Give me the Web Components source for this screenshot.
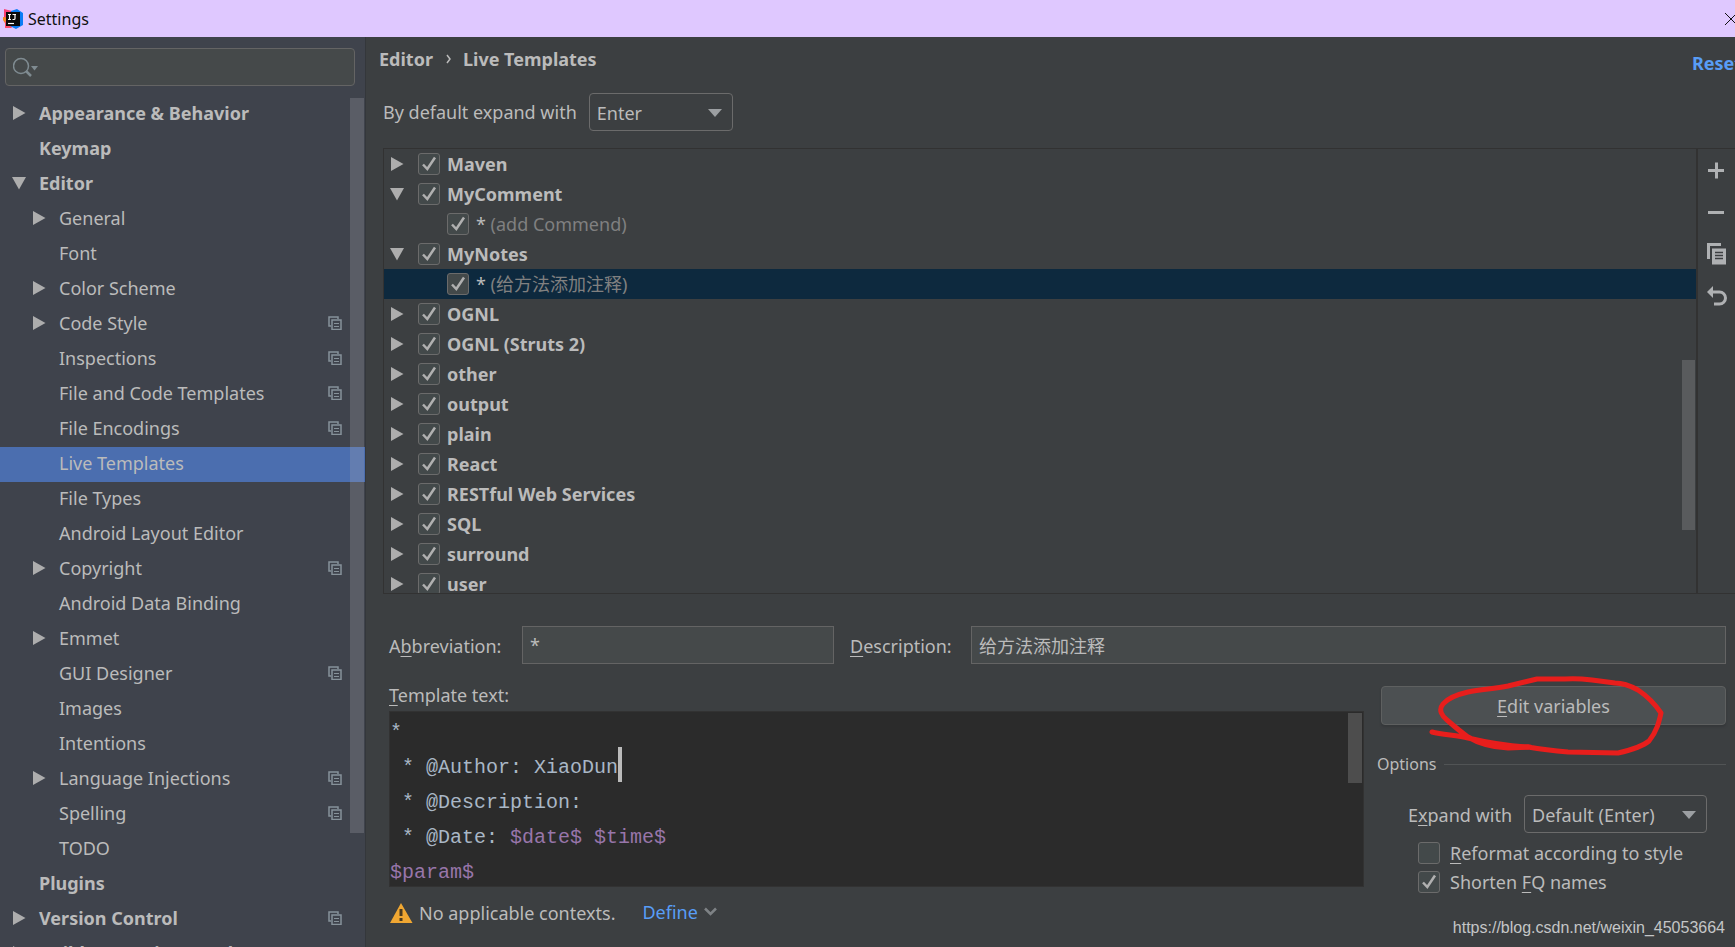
<!DOCTYPE html>
<html lang="en">
<head>
<meta charset="utf-8">
<title>Settings</title>
<style>
  html, body { margin: 0; height: 100%; }
  body {
    font: 18px/30px "Noto Sans", "Noto Sans CJK SC", sans-serif;
    color: #bbbbbb;
    background: #3c3f41;
    overflow: hidden;
  }
</style>
</head>
<body>
<settings-window></settings-window>

<script>
const define = (name, html, setup) => {
  const template = document.createElement('template');
  template.innerHTML = html;
  customElements.define(name, class extends HTMLElement {
    connectedCallback() {
      if (this.shadowRoot) return;
      const root = this.attachShadow({ mode: 'open' });
      root.append(template.content.cloneNode(true));
      if (setup) setup(this, root);
    }
  });
};

/* Disclosure triangle: state="open" | "closed" | "none" */
define('tree-arrow', `
  <style>
    :host { display: block; width: 14px; height: 14px; flex: none; color: #adadad; }
    svg { display: none; width: 14px; height: 14px; }
    :host([state="open"]) .open, :host([state="closed"]) .closed { display: block; }
  </style>
  <svg class="closed" viewBox="0 0 14 14" aria-hidden="true"><path d="M1 0v14l12.500-7z" fill="currentColor"/></svg>
  <svg class="open" viewBox="0 0 14 14" aria-hidden="true"><path d="M0 1h14l-7 12.500z" fill="currentColor"/></svg>
`);

define('project-badge', `
  <style>:host { display: block; width: 14px; height: 14px; } svg { display: block; }</style>
  <svg width="14" height="14" viewBox="0 0 14 14" fill="none" stroke="#87929a" aria-hidden="true">
    <path d="M3 10H1V1h9v2" stroke-width="1.500"/>
    <rect x="4" y="4" width="9" height="9.500" stroke-width="1.500"/>
    <path d="M6 7.500h5M6 10.500h5"/>
  </svg>
`);

define('check-box', `
  <style>
    :host { display: block; }
    label { display: flex; align-items: center; gap: var(--check-gap, 7px); white-space: nowrap; }
    .box { position: relative; width: 22px; height: 22px; flex: none; }
    input {
      appearance: none; display: block; box-sizing: border-box; margin: 0;
      width: 22px; height: 22px; background: #43494a;
      border: 1px solid #6b6b6b; border-radius: 3px;
    }
    svg { position: absolute; inset: 0; display: none; pointer-events: none; }
    input:checked + svg { display: block; }
  </style>
  <label>
    <span class="box">
      <input type="checkbox">
      <svg width="22" height="22" viewBox="0 0 22 22" fill="none" stroke="#b0b0b0" stroke-width="2.500" aria-hidden="true"><path d="M5 11.500l4.300 4.500L17 4.500"/></svg>
    </span>
    <span><slot></slot></span>
  </label>
`, (host, root) => { root.querySelector('input').checked = host.hasAttribute('checked'); });

define('combo-box', `
  <style>
    :host { display: block; position: relative; }
    select {
      appearance: none; display: block; box-sizing: border-box; width: 100%; height: 38px;
      margin: 0; padding: 2px 32px 0 7px; font: inherit; color: #bbbbbb;
      background: #3c3f41; border: 1px solid #6b6b6b; border-radius: 4px; outline: none;
    }
    svg { position: absolute; right: 11px; top: 16px; pointer-events: none; }
  </style>
  <select></select>
  <svg width="14" height="8" viewBox="0 0 14 8" aria-hidden="true"><path d="M0 0h14L7 8z" fill="#9c9fa2"/></svg>
`, (host, root) => {
  const select = root.querySelector('select');
  select.add(new Option(host.getAttribute('value')));
  select.setAttribute('aria-label', host.getAttribute('label'));
});

define('title-bar', `
  <style>
    :host { display: flex; align-items: center; gap: 4px; height: 37px; padding-left: 3px; background: #dfc8ff; color: #101010; font-size: 16px; overflow: hidden; }
    .title { flex: 1; }
    button { flex: none; width: 10px; height: 36px; padding: 0; border: 0; background: none; }
    svg { display: block; }
  </style>
  <svg width="21" height="20" viewBox="0 0 21 20" aria-hidden="true">
    <path d="M1 0l8 2-1 9-7 2z" fill="#fc3f72"/>
    <path d="M0 8l6 1 2 8-5-1-3-5z" fill="#f98a1e"/>
    <path d="M2 12l9 5-3 2-6 0z" fill="#ff4c6c"/>
    <path d="M8 2l6-2 6 4v12l-7 4-6-3z" fill="#0a7cf5"/>
    <rect x="3" y="3" width="14" height="14" fill="#0b0b0b"/>
    <path d="M5 5.500h3M6.500 5.500v5M5 10.500h3M9.500 5.500H13M12 5.500v4q0 1-1 1H9.500" stroke="#fff" stroke-width="1.200" fill="none"/>
    <path d="M5 14.500h6" stroke="#fff" stroke-width="1.200"/>
  </svg>
  <span class="title">Settings</span>
  <button aria-label="Close"><svg width="12" height="36" viewBox="0 0 12 36" aria-hidden="true"><path d="M0 12l12 12M12 12L0 24" stroke="#111"/></svg></button>
`);

define('settings-item', `
  <style>
    :host { display: flex; align-items: center; gap: 13px; box-sizing: border-box; height: 35px; padding: 0 23px 3px 12px; white-space: nowrap; }
    :host([level="1"]) { padding-left: 32px; }
    :host([level="0"]) { font-weight: bold; }
    :host([selected]) { background: #4b6eaf; }
    span { flex: 1; }
  </style>
  <tree-arrow></tree-arrow><span><slot></slot></span>
`, (host, root) => {
  host.setAttribute('role', 'treeitem');
  root.querySelector('tree-arrow').setAttribute('state', host.getAttribute('state') || 'none');
  if (host.hasAttribute('badge')) root.append(document.createElement('project-badge'));
});

define('settings-sidebar', `
  <style>
    :host { display: flex; flex-direction: column; min-height: 0; background: #3f434c; border-right: 1px solid #34373b; }
    .search { position: relative; margin: 11px 10px 11px 5px; }
    .search svg { position: absolute; left: 8px; top: 9px; }
    input {
      display: block; box-sizing: border-box; width: 100%; height: 38px; padding: 0 8px 0 36px;
      font: inherit; color: inherit; background: #45494a; border: 1px solid #646464; border-radius: 4px; outline: none;
    }
    .tree { position: relative; flex: 1; min-height: 0; overflow: hidden; }
    .thumb { position: absolute; right: 1px; top: 1px; width: 14px; height: 735px; background: rgba(170, 170, 180, .25); }
  </style>
  <div class="search">
    <input type="search" aria-label="Search settings">
    <svg width="28" height="20" viewBox="0 0 28 20" fill="none" stroke="#7f8b91" stroke-width="1.500" aria-hidden="true">
      <circle cx="8" cy="9" r="7.500"/><path d="M13 14l5 5" stroke-width="2.500"/><path d="M18 9h7l-3.500 4.500z" fill="#7f8b91" stroke="none"/>
    </svg>
  </div>
  <div class="tree" role="tree">
    <settings-item level="0" state="closed">Appearance &amp; Behavior</settings-item>
    <settings-item level="0">Keymap</settings-item>
    <settings-item level="0" state="open">Editor</settings-item>
    <settings-item level="1" state="closed">General</settings-item>
    <settings-item level="1">Font</settings-item>
    <settings-item level="1" state="closed">Color Scheme</settings-item>
    <settings-item level="1" state="closed" badge>Code Style</settings-item>
    <settings-item level="1" badge>Inspections</settings-item>
    <settings-item level="1" badge>File and Code Templates</settings-item>
    <settings-item level="1" badge>File Encodings</settings-item>
    <settings-item level="1" selected>Live Templates</settings-item>
    <settings-item level="1">File Types</settings-item>
    <settings-item level="1">Android Layout Editor</settings-item>
    <settings-item level="1" state="closed" badge>Copyright</settings-item>
    <settings-item level="1">Android Data Binding</settings-item>
    <settings-item level="1" state="closed">Emmet</settings-item>
    <settings-item level="1" badge>GUI Designer</settings-item>
    <settings-item level="1">Images</settings-item>
    <settings-item level="1">Intentions</settings-item>
    <settings-item level="1" state="closed" badge>Language Injections</settings-item>
    <settings-item level="1" badge>Spelling</settings-item>
    <settings-item level="1">TODO</settings-item>
    <settings-item level="0">Plugins</settings-item>
    <settings-item level="0" state="closed" badge>Version Control</settings-item>
    <settings-item level="0" state="closed">Build, Execution, Deployment</settings-item>
    <div class="thumb"></div>
  </div>
`);

define('template-row', `
  <style>
    :host { display: flex; align-items: center; gap: 14px; height: 30px; padding-left: 6px; font-weight: bold; }
    :host([child]) { padding-left: 35px; font-weight: normal; }
    :host([selected]) { background: #0d293e; }
    ::slotted(i) { font-style: normal; color: #808080; }
  </style>
  <tree-arrow></tree-arrow><check-box checked><slot></slot></check-box>
`, (host, root) => {
  host.setAttribute('role', 'treeitem');
  root.querySelector('tree-arrow').setAttribute('state', host.getAttribute('state') || (host.hasAttribute('child') ? 'none' : 'closed'));
});

define('template-list', `
  <style>
    :host { display: flex; min-height: 0; border: 1px solid #323232; border-right: 0; }
    .tree { position: relative; flex: 1; min-width: 0; overflow: hidden; }
    .thumb { position: absolute; right: 1px; top: 211px; width: 13px; height: 170px; background: #595b5d; }
    .tools { display: flex; flex-direction: column; width: 37px; border-left: 2px solid #323232; }
    button { width: 37px; height: 42px; padding: 0 0 0 8px; border: 0; background: none; }
    svg { display: block; }
  </style>
  <div class="tree" role="tree">
    <template-row>Maven</template-row>
    <template-row state="open">MyComment</template-row>
    <template-row child>* <i>(add Commend)</i></template-row>
    <template-row state="open">MyNotes</template-row>
    <template-row child selected>* <i>(给方法添加注释)</i></template-row>
    <template-row>OGNL</template-row>
    <template-row>OGNL (Struts 2)</template-row>
    <template-row>other</template-row>
    <template-row>output</template-row>
    <template-row>plain</template-row>
    <template-row>React</template-row>
    <template-row>RESTful Web Services</template-row>
    <template-row>SQL</template-row>
    <template-row>surround</template-row>
    <template-row>user</template-row>
    <div class="thumb"></div>
  </div>
  <div class="tools">
    <button aria-label="Add"><svg width="22" height="22" viewBox="0 0 22 22" aria-hidden="true"><path d="M2 11.500h16M10.500 3.500v16" stroke="#afb1b3" stroke-width="3"/></svg></button>
    <button aria-label="Remove"><svg width="22" height="22" viewBox="0 0 22 22" aria-hidden="true"><path d="M2 11.500h16" stroke="#afb1b3" stroke-width="3"/></svg></button>
    <button aria-label="Duplicate"><svg width="22" height="22" viewBox="0 0 22 22" aria-hidden="true"><path d="M2.500 16V1.500H15" fill="none" stroke="#afb1b3" stroke-width="3"/><rect x="5" y="4.500" width="15" height="17" fill="#3c3f41"/><rect x="6" y="5.500" width="14" height="16" fill="#afb1b3"/><path d="M9 9.500h8M9 12.500h8M9 15.500h8" stroke="#3c3f41" stroke-width="1.500"/></svg></button>
    <button aria-label="Restore defaults"><svg width="22" height="22" viewBox="0 0 22 22" aria-hidden="true"><path d="M1 7l6-6v12z" fill="#afb1b3"/><path d="M6 7h7.500a6 6 0 0 1 0 12H8" fill="none" stroke="#afb1b3" stroke-width="3"/></svg></button>
  </div>
`);

define('template-fields', `
  <style>
    :host { display: grid; grid-template-columns: 133px 312px 137px minmax(0, 1fr); align-items: center; }
    input {
      box-sizing: border-box; width: 100%; height: 38px; margin: 0; padding: 0 7px; font: inherit; color: inherit;
      background: #45494a; border: 1px solid #646464; outline: none;
    }
    label { white-space: nowrap; padding-top: 2px; }
    label + input + label { padding-left: 16px; }
    u { text-underline-offset: 3px; }
  </style>
  <label for="abbr">A<u>b</u>breviation:</label><input id="abbr" value="*">
  <label for="desc"><u>D</u>escription:</label><input id="desc" value="给方法添加注释">
`);

define('template-editor', `
  <style>
    :host { display: block; min-width: 0; }
    .label { padding: 15px 0 0; line-height: 32px; }
    .editor {
      position: relative; box-sizing: border-box; height: 176px; overflow: hidden; white-space: pre; outline: none;
      background: #2b2b2b; border: 1px solid #323232; color: #a9b7c6;
      font: 20px/42px "Liberation Mono", monospace;
    }
    .editor p { margin: 0; height: 35px; }
    b { font-weight: normal; color: #9876aa; }
    .caret { display: inline-block; vertical-align: top; width: 4px; height: 35px; background: #bbbbbb; }
    .thumb { position: absolute; right: 1px; top: 1px; width: 14px; height: 70px; background: #4d4d4d; }
    .status { display: flex; align-items: center; height: 52px; }
    .status svg { flex: none; }
    .status span { margin: 0 27px 0 6px; }
    a { display: flex; align-items: center; gap: 6px; color: #589df6; text-decoration: none; margin-bottom: 3px; }
    u { text-underline-offset: 3px; }
  </style>
  <div class="label" id="caption"><u>T</u>emplate text:</div>
  <div class="editor" role="textbox" aria-multiline="true" aria-labelledby="caption" contenteditable="true" spellcheck="false"><p>*</p><p> * @Author: XiaoDun<span class="caret"></span></p><p> * @Description:</p><p> * @Date: <b>$date$</b> <b>$time$</b></p><p><b>$param$</b></p><div class="thumb" contenteditable="false"></div></div>
  <div class="status">
    <svg width="24" height="22" viewBox="0 0 24 22" aria-hidden="true"><path d="M12 1l11.500 20H1z" fill="#f0a732"/><path d="M12 7v7M12 16v3" stroke="#4a3a20" stroke-width="3"/></svg>
    <span>No applicable contexts.</span>
    <a href="#define">Define <svg width="13" height="9" viewBox="0 0 13 9" fill="none" stroke="#7e8285" stroke-width="2.500" aria-hidden="true"><path d="M1 1.500l5.500 5.500L12 1.500"/></svg></a>
  </div>
`);

define('template-options', `
  <style>
    :host { display: block; padding-top: 22px; }
    .edit { position: relative; }
    button {
      display: block; box-sizing: border-box; width: 100%; height: 39px; padding: 0; font: inherit; color: inherit;
      background: #4c5052; border: 1px solid #5e6060; border-radius: 4px; box-shadow: 0 2px 2px #35383a;
    }
    .mark { position: absolute; left: 40px; top: -20px; pointer-events: none; }
    fieldset { margin: 24px 0 0 -4px; padding: 0; border: 0; }
    .legend { display: flex; align-items: center; gap: 8px; font-size: 16px; }
    .legend::after { content: ""; flex: 1; height: 1px; background: #515455; }
    .expand { display: flex; align-items: center; gap: 12px; margin: 16px 19px 0 31px; }
    .expand span { padding-top: 2px; }
    combo-box { flex: 1; }
    .checks { --check-gap: 10px; margin: 5px 0 0 41px; }
    check-box { height: 29px; }
    u { text-underline-offset: 3px; }
  </style>
  <div class="edit">
    <button><u>E</u>dit variables</button>
    <svg class="mark" width="260" height="100" viewBox="40 -20 260 100" fill="none" stroke="#e81e1c" stroke-width="5" stroke-linecap="round" stroke-linejoin="round" aria-hidden="true">
      <path d="M51 46C62 49 76 49 87 52C108 57 127 60 147 61C164 64 175 65 187 66L237 67C250 64 262 60 268 55C276 45 278 36 280 27C274 18 266 10 257 4C248 -1 241 -3 234 -3L211 -6Q195 -8 184 -7L156 -7L127 0C112 3 100 3 87 6C74 9 66 13 62 18C57 24 61 30 66 34C74 41 80 46 87 51C97 57 108 61 127 62L149 61"/>
      <path d="M98 55L110 59L127 61L147 61"/>
    </svg>
  </div>
  <fieldset aria-label="Options">
    <div class="legend">Options</div>
    <div class="expand"><span>E<u>x</u>pand with</span><combo-box value="Default (Enter)" label="Expand with"></combo-box></div>
    <div class="checks">
      <check-box><u>R</u>eformat according to style</check-box>
      <check-box checked>Shorten <u>F</u>Q names</check-box>
    </div>
  </fieldset>
`);

define('live-templates', `
  <style>
    :host { position: relative; display: flex; flex-direction: column; min-width: 0; min-height: 0; overflow: hidden; }
    nav { display: flex; align-items: center; gap: 12px; height: 44px; padding-left: 13px; font-weight: bold; }
    nav .reset { flex: none; width: 43px; margin: 8px 0 0 auto; color: #589df6; text-decoration: none; }
    .default { display: flex; align-items: center; gap: 12px; padding: 12px 0 17px 17px; }
    .default combo-box { width: 144px; }
    template-list { flex: 1; margin-left: 17px; }
    .form { flex: none; padding: 32px 9px 8px 23px; }
    .lower { display: grid; grid-template-columns: minmax(0, 1fr) 345px; gap: 17px; }
    .watermark { position: absolute; right: 10px; bottom: 4px; font: 16px/30px "Liberation Sans", sans-serif; color: #c4c6c7; }
  </style>
  <nav>
    <span>Editor</span>
    <svg width="6" height="10" viewBox="0 0 6 10" fill="none" stroke="#bbbbbb" stroke-width="1.500" aria-hidden="true"><path d="M2 1l3 4-3 4"/></svg>
    <span>Live Templates</span>
    <a class="reset" href="#reset">Reset</a>
  </nav>
  <div class="default"><span>By default expand with</span><combo-box value="Enter" label="By default expand with"></combo-box></div>
  <template-list></template-list>
  <div class="form">
    <template-fields></template-fields>
    <div class="lower"><template-editor></template-editor><template-options></template-options></div>
  </div>
  <div class="watermark">https://blog.csdn.net/weixin_45053664</div>
`);

define('settings-window', `
  <style>
    :host { display: grid; grid-template: auto minmax(0, 1fr) / 366px minmax(0, 1fr); height: 100vh; overflow: hidden; }
    title-bar { grid-column: 1 / -1; }
  </style>
  <title-bar></title-bar>
  <settings-sidebar></settings-sidebar>
  <live-templates></live-templates>
`);
</script>
</body>
</html>
